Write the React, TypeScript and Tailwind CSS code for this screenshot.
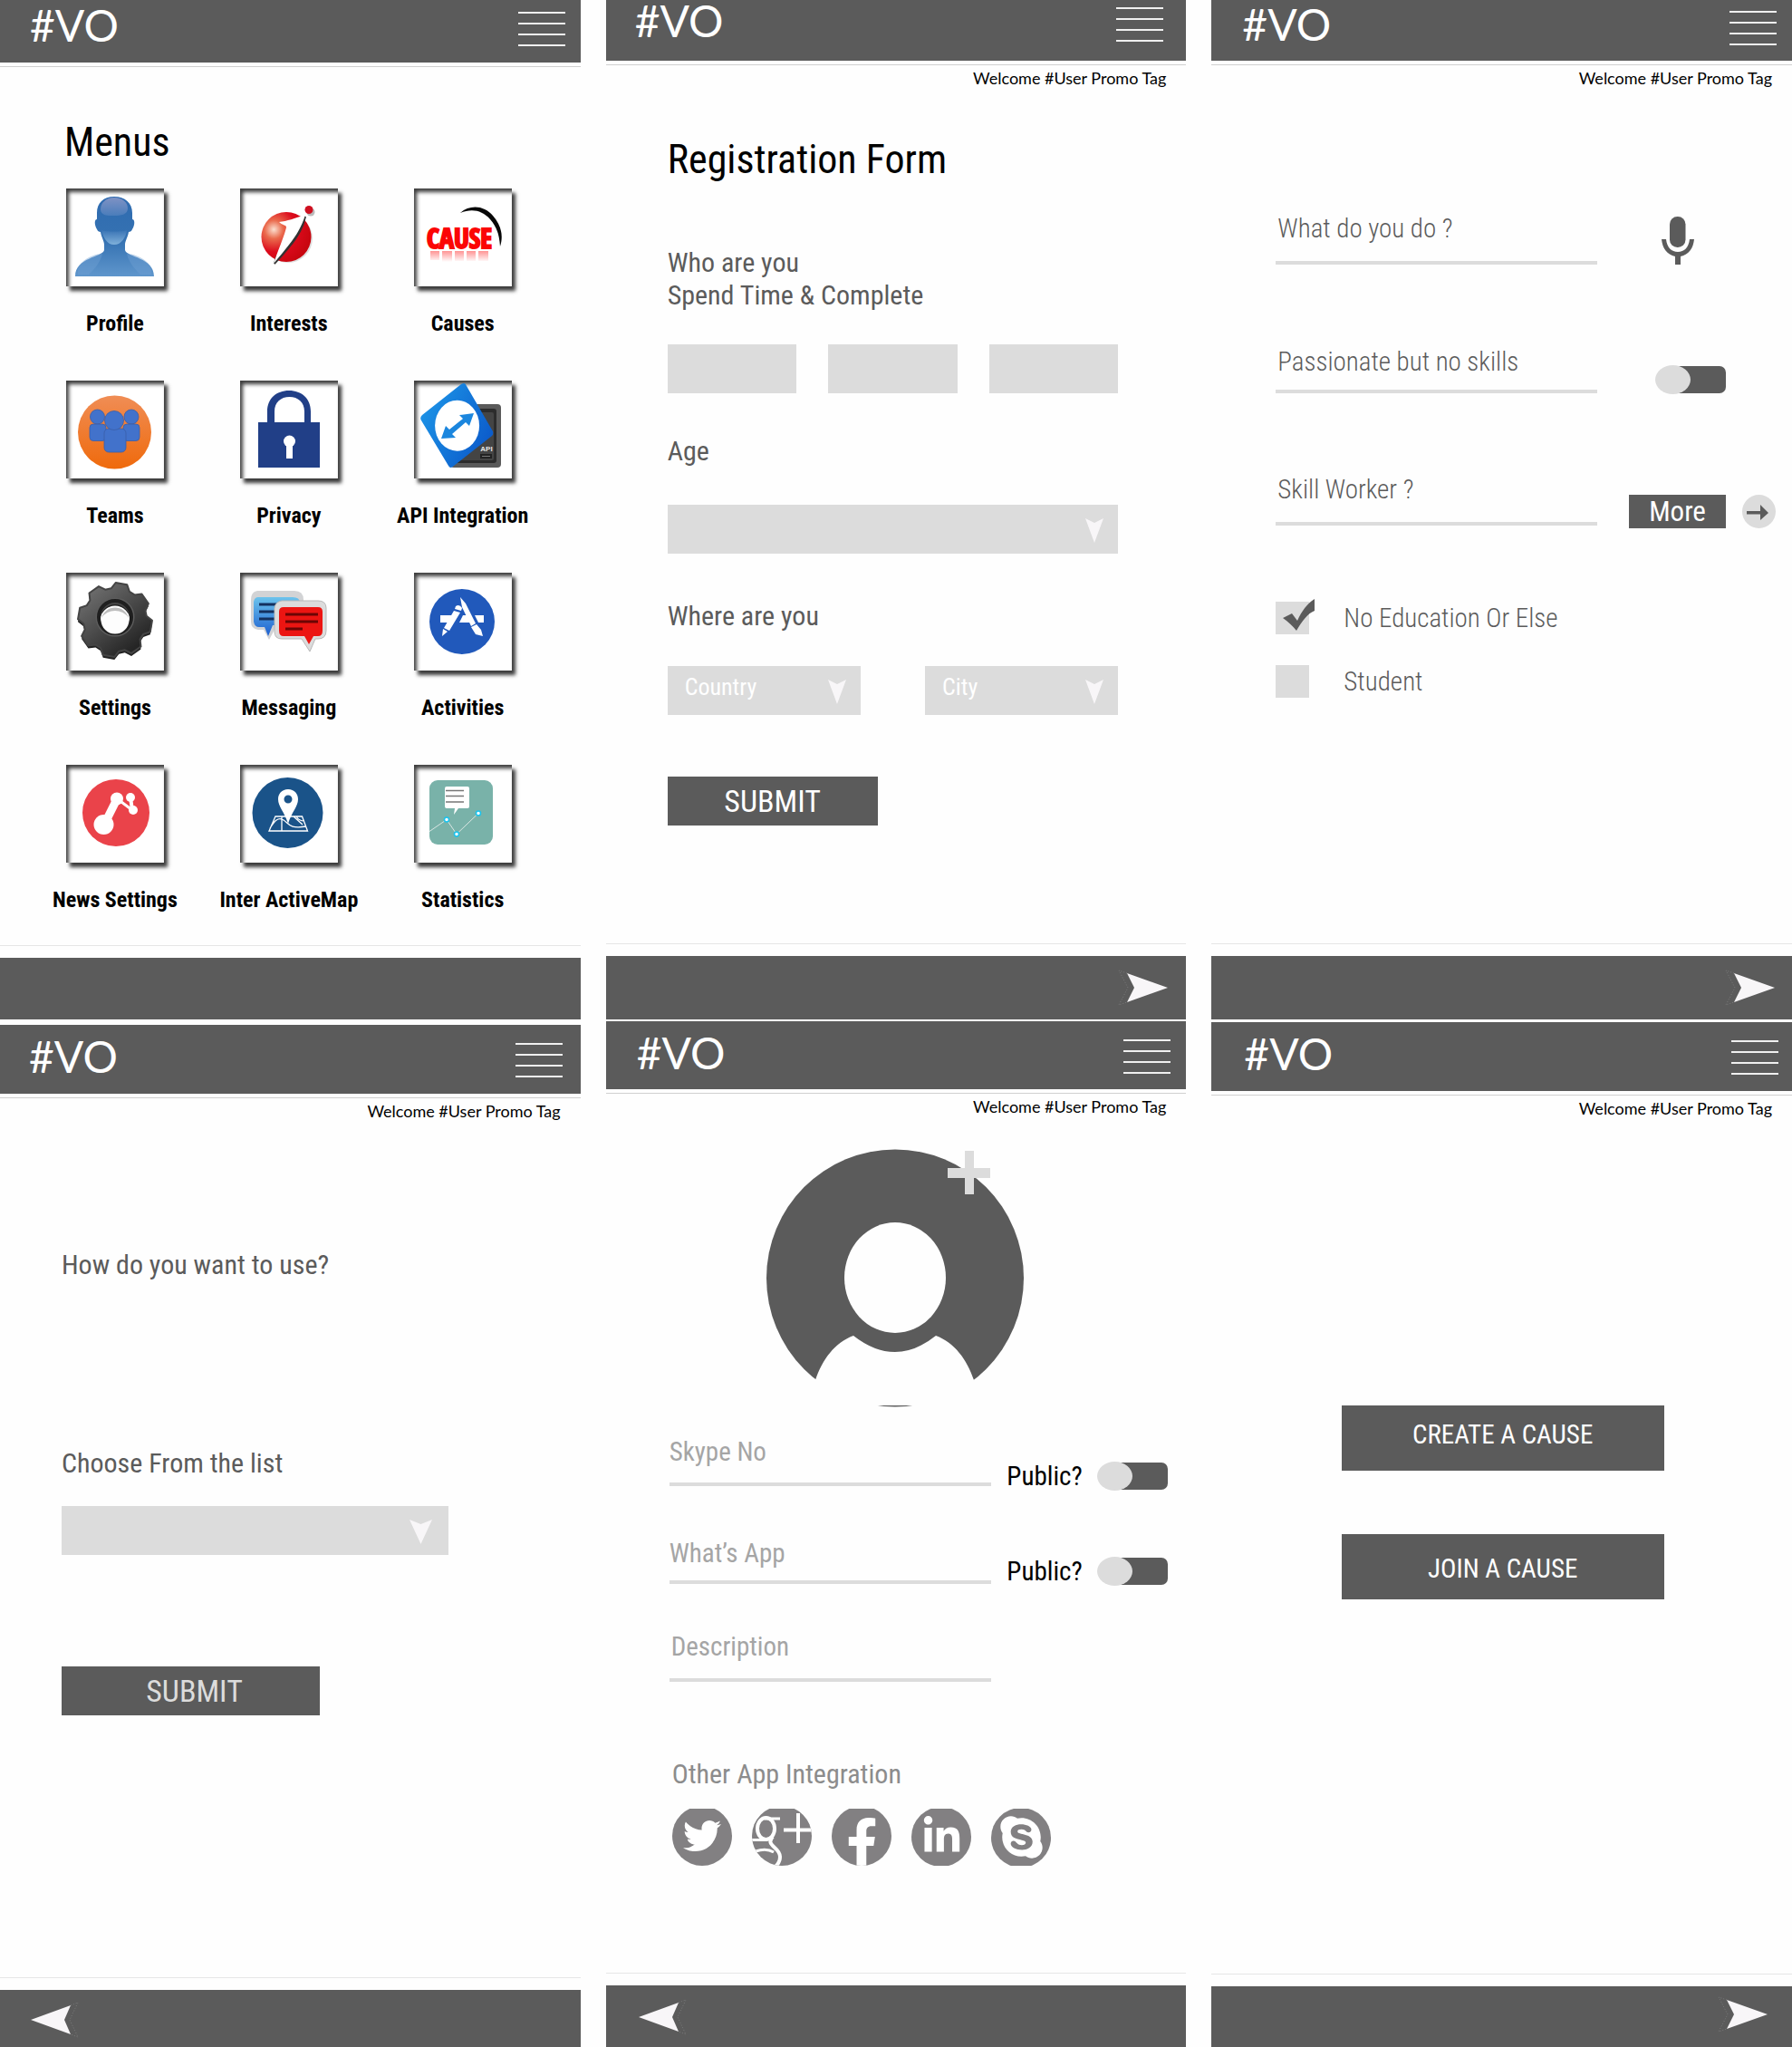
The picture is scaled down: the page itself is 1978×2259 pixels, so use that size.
import React from "react";
import {
  FaFacebookF,
  FaLinkedinIn,
  FaSkype,
  FaTwitter,
} from "react-icons/fa";

/* ---------- shared pieces ---------- */

function Burger() {
  return (
    <button type="button" aria-label="Open menu" className="mt-[5px] flex w-[52px] flex-col gap-[10px]">
      <span className="h-[2px] w-full bg-[#f0f0f0]" />
      <span className="h-[2px] w-full bg-[#f0f0f0]" />
      <span className="h-[2px] w-full bg-[#f0f0f0]" />
      <span className="h-[2px] w-full bg-[#f0f0f0]" />
    </button>
  );
}

function NavArrow({ back = false }: { back?: boolean }) {
  return (
    <button type="button" aria-label={back ? "Back" : "Next"} className="h-8 w-[54px]">
      <svg viewBox="0 0 54 32" className="h-8 w-[54px] overflow-visible">
        {back ? (
          <>
            <path d="M0 16 44 0 37 16 44 32Z" fill="#f8f6f8" />
            <path d="M44 0 52 -3 43 16 52 35 44 32" fill="none" stroke="#7c7c7c" strokeDasharray="1 2" />
          </>
        ) : (
          <>
            <path d="M54 16 9 0 17 16 9 32Z" fill="#f8f6f8" />
            <path d="M9 0 0 -3 10 16 0 35 9 32" fill="none" stroke="#7c7c7c" strokeDasharray="1 2" />
          </>
        )}
      </svg>
    </button>
  );
}

type ScreenProps = {
  headerClass: string;
  footerClass: string;
  className?: string;
  welcome?: boolean;
  nav?: "back" | "next";
  children: React.ReactNode;
};

function Screen({ headerClass, footerClass, className = "", welcome = true, nav, children }: ScreenProps) {
  return (
    <section className={"flex flex-col " + className}>
      <header className={"flex items-start justify-between bg-[#5b5b5b] " + headerClass}>
        <a href="#home" className="font-['Lato','Open_Sans',sans-serif] text-[48px] leading-10 text-white">
          #VO
        </a>
        <Burger />
      </header>
      <div className="mt-1 h-px bg-[#d0d0d0]" />
      {welcome && (
        <p className="px-[22px] text-right font-['Lato',sans-serif] text-[18px] leading-7 text-black">
          Welcome #User Promo Tag
        </p>
      )}
      <main className="flex-1">{children}</main>
      <div className="mb-[13px] h-px bg-[#e6e6e6]" />
      <footer className={"flex items-start bg-[#5b5b5b] " + footerClass}>{nav && <NavArrow back={nav === "back"} />}</footer>
    </section>
  );
}

type DropDownProps = { label?: string; id: string; text?: string; className?: string; arrowClass?: string };

function DropDown({ label, id, text = "", className = "", arrowClass = "right-4 w-5" }: DropDownProps) {
  return (
    <div className={"relative " + className}>
      <select
        id={id}
        aria-label={label}
        className="h-[54px] w-full appearance-none bg-[#dcdcdc] pr-12 pb-2 pl-[19px] text-[26px] text-white"
      >
        <option>{text}</option>
      </select>
      <svg
        viewBox="0 0 20 27"
        preserveAspectRatio="none"
        className={"pointer-events-none absolute top-[15px] h-[27px] " + arrowClass}
        aria-hidden="true"
      >
        <path d="M0 0 10 5 20 0 10 27Z" fill="#f8f6f8" />
      </svg>
    </div>
  );
}

function Toggle({ label, text }: { label?: string; text?: string }) {
  return (
    <label className="flex items-center justify-between">
      {text && <span className="text-[29px] leading-8 text-black">{text}</span>}
      <input type="checkbox" role="switch" aria-label={label} className="sr-only" />
      <span className="flex w-[78px] items-center">
        <span className="z-10 h-8 w-[39px] shrink-0 rounded-[50%] bg-[#dcdcdc]" />
        <span className="-ml-5 h-[30px] flex-1 rounded-[7px] bg-[#5b5b5b]" />
      </span>
    </label>
  );
}

function LineField({ label, className = "" }: { label: string; className?: string }) {
  return (
    <input
      type="text"
      aria-label={label}
      placeholder={label}
      className={"min-w-0 flex-1 border-b-4 border-[#dcdcdc] bg-transparent pt-0 leading-9 outline-none " + className}
    />
  );
}

/* ---------- menu icons ---------- */

function ProfileIcon() {
  return (
    <>
      <defs>
        <linearGradient id="pf" x1="0" y1="0" x2="0" y2="1">
          <stop offset="0" stopColor="#2f6bb0" />
          <stop offset="0.55" stopColor="#3572b2" />
          <stop offset="1" stopColor="#5f96cc" />
        </linearGradient>
        <linearGradient id="pfh" x1="0" y1="0" x2="0" y2="1">
          <stop offset="0" stopColor="#7f92c4" />
          <stop offset="1" stopColor="#4a7dbb" />
        </linearGradient>
        <linearGradient id="pfc" x1="0" y1="0" x2="0" y2="1">
          <stop offset="0" stopColor="#3a74b5" />
          <stop offset="1" stopColor="#7fb0da" />
        </linearGradient>
      </defs>
      <path
        d="M53 9C41 9 34 16 34 27V34C31 34 31 40 34 45Q35 48 38 48C39 54 42 58 42 62V68C40 76 10 76 10 97H97C97 76 67 76 65 68V62C65 58 68 54 69 48Q72 48 73 45C76 40 76 34 73 34V27C73 16 65 9 53 9Z"
        fill="url(#pf)"
      />
      <path d="M53 10C44 10 38 16 38 23S46 30 53 30 68 29 68 22 62 10 53 10Z" fill="url(#pfh)" />
      <path d="M39 46C44 48 62 48 67 46 66 54 61 62 53 62S41 54 39 46Z" fill="url(#pfc)" />
      <path d="M17 82C24 75 34 72 40 72 38 82 30 90 25 95H13C12 90 14 85 17 82ZM90 82C83 75 73 72 67 72 69 82 77 90 82 95H94C95 90 93 85 90 82Z" fill="#6f9fd2" opacity="0.45" />
    </>
  );
}

function InterestsIcon() {
  return (
    <>
      <defs>
        <radialGradient id="ball" cx="0.25" cy="0.35" r="0.75">
          <stop offset="0" stopColor="#fbe0d0" />
          <stop offset="0.25" stopColor="#ea6a4c" />
          <stop offset="0.6" stopColor="#dc0a1c" />
          <stop offset="1" stopColor="#c8060f" />
        </radialGradient>
      </defs>
      <circle cx="53" cy="55" r="27" fill="#dedede" />
      <circle cx="51" cy="53.5" r="27.5" fill="url(#ball)" />
      <path d="M72 31C68 50 56 63 38 83L40 76C54 62 64 50 72 31Z" fill="#333" stroke="#333" strokeWidth="2" />
      <path d="M43 37C52 36 60 33 72 29 66 49 56 60 37 83 42 68 49 52 51 43 51 40 47 41 43 37Z" fill="#fff" />
      <circle cx="78" cy="26" r="4.5" fill="#bbb" />
      <circle cx="76" cy="23.5" r="4.5" fill="#cf1020" />
    </>
  );
}

function CausesIcon() {
  return (
    <>
      <defs>
        <linearGradient id="refl" x1="0" y1="0" x2="0" y2="1">
          <stop offset="0" stopColor="#f66" stopOpacity="0.7" />
          <stop offset="1" stopColor="#f66" stopOpacity="0" />
        </linearGradient>
      </defs>
      <text
        x="50"
        y="66"
        textAnchor="middle"
        className="font-['Open_Sans_Condensed','Roboto_Condensed',sans-serif] text-[30px] font-bold"
        fill="#fb0505"
        stroke="#fb0505"
        strokeWidth="2"
      >
        CAUSE
      </text>
      <path d="M18 69H28V79H18ZM31 69H42V81H31ZM45 69H55V80H45ZM58 69H68V80H58ZM71 69H82V80H71Z" fill="url(#refl)" />
      <path d="M51 27C62 17 78 19 87 30 96 40 99 52 95 64 94 50 91 42 84 34 75 24 64 22 51 27Z" fill="#080808" />
    </>
  );
}

function TeamsIcon() {
  return (
    <>
      <defs>
        <linearGradient id="tm" x1="0" y1="0" x2="0" y2="1">
          <stop offset="0" stopColor="#f08d55" />
          <stop offset="1" stopColor="#ef6a0c" />
        </linearGradient>
      </defs>
      <circle cx="53.5" cy="57" r="40.5" fill="url(#tm)" />
      <g fill="#4272cb" stroke="#3a5ea8" strokeWidth="0.8">
        <circle cx="34.5" cy="40" r="8" />
        <rect x="26" y="48" width="18" height="18.5" rx="4" />
        <circle cx="72" cy="40" r="8" />
        <rect x="63" y="48" width="18" height="18.5" rx="4" />
        <rect x="42" y="53" width="24" height="26" rx="5" />
        <circle cx="53" cy="44" r="10.5" />
      </g>
    </>
  );
}

function PrivacyIcon() {
  return (
    <>
      <path d="M20 46H30V34C30 20 40 11 54 11S78 20 78 34V46H88V96H20ZM38 46H71V34C71 24 64 18 54.5 18S38 24 38 34Z" fill="#213f87" fillRule="evenodd" />
      <circle cx="54.5" cy="67" r="6.5" fill="#fff" />
      <rect x="51" y="70" width="7" height="16" fill="#fff" />
    </>
  );
}

function ApiIcon() {
  return (
    <>
      <defs>
        <linearGradient id="api" x1="0" y1="0.2" x2="1" y2="0.8">
          <stop offset="0" stopColor="#1d96e8" />
          <stop offset="1" stopColor="#0a56c8" />
        </linearGradient>
      </defs>
      <rect x="40" y="26" width="56" height="70" rx="4" fill="#5a5a5a" />
      <rect x="45" y="31" width="46" height="60" rx="3" fill="#2c2c2c" />
      <rect x="48" y="35" width="40" height="53" rx="2" fill="#444" />
      <text x="80" y="78" textAnchor="middle" className="font-['Liberation_Sans',sans-serif] text-[8px] font-bold" fill="#e6e6e6">
        API
      </text>
      <rect x="73" y="81" width="13" height="5" fill="#222" />
      <path d="M75 83.5H84" stroke="#777" />
      <path d="M55 3Q57 3 58 6L87 56Q88 59 86 61L44 94Q40 98 38 94L8 44Q6 41 9 38L52 4Q54 3 55 3Z" fill="url(#api)" />
      <ellipse cx="47.6" cy="49.7" rx="24.5" ry="28" fill="#fff" />
      <path d="M66 36 61 50 57 46 42 59 46 63 30 64 35 50 39 54 54 42 50 38Z" fill="#1b86de" />
    </>
  );
}

const gearPath = (() => {
  const pts: string[] = [];
  for (let i = 0; i < 8; i++) {
    const mid = 10 + i * 45;
    const steps: [number, number][] = [
      [mid - 17, 35],
      [mid - 9, 41],
      [mid + 9, 41],
      [mid + 17, 35],
    ];
    for (const [deg, r] of steps) {
      const a = (deg * Math.PI) / 180;
      pts.push((54 + r * Math.sin(a)).toFixed(1) + " " + (52 - r * Math.cos(a)).toFixed(1));
    }
  }
  return "M" + pts.join("L") + "Z";
})();

const gearHole = "M54 34A17 17 0 1 0 54 68A17 17 0 1 0 54 34Z";

function SettingsIcon() {
  return (
    <>
      <defs>
        <linearGradient id="gear" x1="0" y1="0" x2="0.8" y2="1">
          <stop offset="0" stopColor="#7a7a7a" />
          <stop offset="0.5" stopColor="#4c4c4c" />
          <stop offset="1" stopColor="#1c1c1c" />
        </linearGradient>
      </defs>
      <path d={gearPath + gearHole} fill="#222" fillRule="evenodd" transform="translate(0 3)" />
      <path d={gearPath + gearHole} fill="url(#gear)" fillRule="evenodd" strokeLinejoin="round" stroke="#444" strokeWidth="2" />
      <circle cx="54" cy="49" r="20.5" fill="none" stroke="#5c5c5c" strokeWidth="2" />
      <circle cx="54" cy="49" r="18" fill="none" stroke="#1f1f1f" strokeWidth="4" />
      <circle cx="54" cy="52" r="15.5" fill="#fdfdfd" />
      <path d="M39 50A15.5 15.5 0 0 1 69 50 18 18 0 0 0 39 50Z" fill="#bdbdbd" />
    </>
  );
}

function MessagingIcon() {
  return (
    <>
      <defs>
        <linearGradient id="blu" x1="0" y1="0" x2="0" y2="1">
          <stop offset="0" stopColor="#6cc3ec" />
          <stop offset="1" stopColor="#1d5fd0" />
        </linearGradient>
      </defs>
      <path d="M19 20H60Q70 20 70 30V50Q70 62 60 63H38L32 74 26 63H20Q12 62 12 54V30Q12 21 19 20Z" fill="#d2d3d5" />
      <path d="M20 27H58Q66 27 66 33V58H36L31 70 27 60H21Q16 60 15 54V32Q16 27 20 27Z" fill="url(#blu)" />
      <path d="M21 35H46M21 43H46M21 51H46" stroke="#14305e" strokeWidth="3" />
      <path d="M46 31H86Q95 31 95 39V64Q95 73 86 73H83L77 87 68 73H46Q38 73 38 65V39Q39 32 46 31Z" fill="#dcdcdc" stroke="#b9b9b9" />
      <path d="M48 38H86Q91 38 91 43V64Q91 70 86 70H81L76 79 71 70H48Q43 70 43 64V43Q43 38 48 38Z" fill="#ec1512" />
      <path d="M50 46H86M50 54H86M50 62H69" stroke="#6d0504" strokeWidth="3" />
    </>
  );
}

function ActivitiesIcon() {
  return (
    <>
      <circle cx="53" cy="54" r="36" fill="#2159bb" />
      <path d="M29 47H44L39 55H29ZM54 47H59L63 55H50ZM67 47H77V55H71Z" fill="#fff" />
      <path d="M46 37Q50 34 53 39L52 42 45 40ZM44 42 51 44 39 64 33 61ZM32 62 37 65 31 70Z" fill="#fff" />
      <path d="M51 27 57 34 68 56 63 59 53 38ZM63 60 69 57 74 63 76 70 68 68Z" fill="#fff" />
    </>
  );
}

function NewsIcon() {
  return (
    <>
      <circle cx="55" cy="53" r="37" fill="#ea434a" />
      <g fill="#fff" stroke="#fff" strokeLinecap="round">
        <circle cx="41.5" cy="66" r="11" stroke="none" />
        <circle cx="56" cy="37.5" r="7" stroke="none" />
        <circle cx="71" cy="36" r="5" stroke="none" />
        <circle cx="74" cy="50" r="5" stroke="none" />
        <path d="M44 62 55 40" strokeWidth="9" />
        <path d="M57 38 73 50" strokeWidth="3" />
        <path d="M71 36 73 50" strokeWidth="4" />
      </g>
    </>
  );
}

function MapIcon() {
  return (
    <>
      <circle cx="52.5" cy="53" r="39" fill="#1a5389" />
      <g fill="none" stroke="#fff" strokeWidth="1.3">
        <path d="M39 57H68.5L74.5 73H32ZM46 57V73M33 70C38 62 42 57 48 61S54 71 73 68M59 57 69 66M62 57Q65 62 71 62" />
      </g>
      <path d="M53 27C46 27 42 32 42 38 42 46 49 52 53 65 57 52 64 46 64 38 64 32 60 27 53 27ZM53 33.5A4.5 4.5 0 1 1 53 42.5 4.5 4.5 0 1 1 53 33.5Z" fill="#fff" fillRule="evenodd" />
    </>
  );
}

function StatisticsIcon() {
  return (
    <>
      <rect x="17" y="17" width="70" height="71" rx="9" fill="#79b2a9" />
      <path d="M36 24H59Q61 24 61 26V46Q61 48 59 48H49L44 55 45 48H36Q34 48 34 46V26Q34 24 36 24Z" fill="#fff" />
      <path d="M35 28.5H55M35 34.5H55M35 41H55" stroke="#777" strokeWidth="1.5" />
      <path d="M17 73.5 36 60.5 47 76.5 71 53.5" fill="none" stroke="#d9e6e3" />
      <g fill="#fff" stroke="#19c3ee" strokeWidth="1.5">
        <circle cx="36" cy="60.5" r="2.5" />
        <circle cx="47" cy="76.5" r="2.5" />
        <circle cx="71" cy="53.5" r="2.5" />
      </g>
    </>
  );
}

const menuItems = [
  { label: "Profile", Icon: ProfileIcon },
  { label: "Interests", Icon: InterestsIcon },
  { label: "Causes", Icon: CausesIcon },
  { label: "Teams", Icon: TeamsIcon },
  { label: "Privacy", Icon: PrivacyIcon },
  { label: "API Integration", Icon: ApiIcon },
  { label: "Settings", Icon: SettingsIcon },
  { label: "Messaging", Icon: MessagingIcon },
  { label: "Activities", Icon: ActivitiesIcon },
  { label: "News Settings", Icon: NewsIcon },
  { label: "Inter ActiveMap", Icon: MapIcon },
  { label: "Statistics", Icon: StatisticsIcon },
];

/* ---------- screens ---------- */

function MenuScreen() {
  return (
    <Screen headerClass="h-[69px] pt-2 pr-[17px] pl-[33px]" footerClass="h-[68px]" welcome={false}>
      <h1 className="mt-[58px] pl-[71px] text-[44px] leading-[50px] text-black">Menus</h1>
      <nav className="mt-[26px] grid grid-cols-3 gap-y-[46px] pr-[34px] pb-[33px] pl-[31px]">
        {menuItems.map(({ label, Icon }) => (
          <a key={label} href="#menu" className="flex flex-col items-center">
            <span className="h-[108px] w-[108px] bg-white shadow-[4px_5px_4px_#3c3c3c,inset_3px_4px_4px_#3c3c3c]">
              <svg viewBox="0 0 108 108" className="h-[108px] w-[108px]" aria-hidden="true">
                <Icon />
              </svg>
            </span>
            <span className="mt-[25px] mb-px text-[24px] leading-8 font-bold whitespace-nowrap text-black">{label}</span>
          </a>
        ))}
      </nav>
    </Screen>
  );
}

function RegistrationScreen() {
  return (
    <Screen headerClass="h-[67px] pt-[3px] pr-[25px] pl-8" footerClass="h-[70px] justify-end pt-[19px] pr-5" nav="next">
      <form className="pt-[51px] pr-[75px] pb-[130px] pl-[68px]" onSubmit={(e) => e.preventDefault()}>
        <h1 className="text-[44px] leading-[50px] whitespace-nowrap text-black">Registration Form</h1>
        <p className="mt-[71px] text-[30px] leading-9 whitespace-nowrap">
          Who are you
          <br />
          Spend Time &amp; Complete
        </p>
        <div className="mt-9 grid grid-cols-3 gap-[35px]">
          <input type="text" aria-label="First name" className="h-[54px] w-full bg-[#dcdcdc] px-3 text-[26px]" />
          <input type="text" aria-label="Middle name" className="h-[54px] w-full bg-[#dcdcdc] px-3 text-[26px]" />
          <input type="text" aria-label="Last name" className="h-[54px] w-full bg-[#dcdcdc] px-3 text-[26px]" />
        </div>
        <label htmlFor="age" className="mt-[46px] block text-[30px] leading-9">
          Age
        </label>
        <DropDown id="age" className="mt-[41px]" />
        <p className="mt-[51px] text-[30px] leading-9">Where are you</p>
        <div className="mt-[37px] grid grid-cols-2 gap-[71px]">
          <DropDown id="country" label="Country" text="Country" />
          <DropDown id="city" label="City" text="City" />
        </div>
        <button type="submit" className="mt-[68px] h-[54px] w-[232px] bg-[#5b5b5b] text-[34px] leading-none text-white">
          SUBMIT
        </button>
      </form>
    </Screen>
  );
}

function CheckRow({ label, checked = false }: { label: string; checked?: boolean }) {
  return (
    <label className="flex items-center">
      <span className="relative h-9 w-[37px]">
        <input type="checkbox" defaultChecked={checked} className="peer h-9 w-[37px] appearance-none bg-[#dcdcdc]" />
        <svg
          viewBox="0 0 36 36"
          className="pointer-events-none absolute -top-[3px] left-2 hidden h-9 w-9 peer-checked:block"
          aria-hidden="true"
        >
          <path d="M0 21 10 16 16 24C21 13 27 5 35 0V13C27 16 21 25 15 35 11 30 6 25 0 21Z" fill="#5b5b5b" />
        </svg>
      </span>
      <span className="ml-[38px] text-[29px] leading-9 font-light">{label}</span>
    </label>
  );
}

function SkillsScreen() {
  const field = "placeholder:text-[#5b5b5b] text-[#5b5b5b] pl-[2px] text-[29px] font-light";
  return (
    <Screen headerClass="h-[67px] pt-[7px] pr-[17px] pl-[34px]" footerClass="h-[70px] justify-end pt-[19px] pr-[19px]" nav="next">
      <form className="pt-[134px] pb-[271px] pl-[71px]" onSubmit={(e) => e.preventDefault()}>
        <div className="flex items-end">
          <LineField label="What do you do ?" className={field + " pb-[18px]"} />
          <div className="w-[215px] pl-[71px]">
            <button type="button" aria-label="Speak" className="block">
              <svg viewBox="0 0 36 53" className="h-[53px] w-9" fill="#5b5b5b">
                <rect x="9" y="0" width="17.5" height="34" rx="8.5" />
                <path d="M0 25H5C6 34 11 39 18 39S30 34 31 25H36C35 35 30 42 21 44V53H15V44C6 42 1 35 0 25Z" />
              </svg>
            </button>
          </div>
        </div>
        <div className="mt-[89px] flex items-end">
          <LineField label="Passionate but no skills" className={field + " pb-[13px]"} />
          <div className="-mb-px w-[215px] pr-[73px] pl-16">
            <Toggle label="Passionate but no skills" />
          </div>
        </div>
        <div className="mt-[88px] flex items-end">
          <LineField label="Skill Worker ?" className={field + " pb-[18px]"} />
          <div className="-mb-[3px] flex w-[215px] items-center gap-[18px] pl-[35px]">
            <button type="button" className="h-[37px] w-[107px] bg-[#5b5b5b] text-[31px] leading-none text-white">
              More
            </button>
            <button type="button" aria-label="Continue" className="h-[37px] w-[37px] rounded-full bg-[#dcdcdc]">
              <svg viewBox="0 0 37 37" className="h-[37px] w-[37px]" aria-hidden="true">
                <path d="M5 18H20V11L29 20 20 28V21.5H5Z" fill="#5b5b5b" />
              </svg>
            </button>
          </div>
        </div>
        <div className="mt-[84px] flex flex-col gap-[34px]">
          <CheckRow label="No Education Or Else" checked />
          <CheckRow label="Student" />
        </div>
      </form>
    </Screen>
  );
}

function UsageScreen() {
  return (
    <Screen
      className="flex-1"
      headerClass="h-[76px] pt-[15px] pr-5 pl-8"
      footerClass="h-[63px] pt-[17px] pl-[34px]"
      nav="back"
    >
      <form className="pt-[138px] pl-[68px]" onSubmit={(e) => e.preventDefault()}>
        <p className="text-[30px] leading-9">How do you want to use?</p>
        <label htmlFor="use" className="mt-[183px] block text-[30px] leading-9">
          Choose From the list
        </label>
        <DropDown id="use" className="mt-[29px] mr-[146px]" arrowClass="right-[18px] w-[25px]" />
        <button type="submit" className="mt-[123px] h-[54px] w-[285px] bg-[#5b5b5b] pl-2 text-[34px] leading-none text-[#dcdcdc]">
          SUBMIT
        </button>
      </form>
    </Screen>
  );
}

function SocialIcon({ label, cy = 30, children }: { label: string; cy?: number; children: React.ReactNode }) {
  return (
    <a href="#integration" aria-label={label} className="block h-16 w-[66px]">
      <svg viewBox="0 0 66 64" className="h-16 w-[66px]">
        <defs>
          <clipPath id={"disc-" + label}>
            <circle cx="33" cy={cy} r="33" />
          </clipPath>
        </defs>
        <g clipPath={"url(#disc-" + label + ")"}>
          <rect width="66" height="63" fill="#828082" />
          {children}
        </g>
      </svg>
    </a>
  );
}

function ContactScreen() {
  const field = "placeholder:text-[#a5a5a5] text-[#5b5b5b] text-[29px]";
  return (
    <Screen
      className="flex-1"
      headerClass="h-[75px] pt-[15px] pr-[17px] pl-[34px]"
      footerClass="h-[68px] pt-[19px] pl-9"
      nav="back"
    >
      <form className="pt-[33px] pr-[20px] pl-[70px]" onSubmit={(e) => e.preventDefault()}>
        <button type="button" aria-label="Add a photo" className="ml-[107px] block">
          <svg viewBox="0 0 284 285" className="h-[285px] w-[284px]">
            <circle cx="142" cy="142.5" r="142" fill="#5b5b5b" />
            <ellipse cx="142" cy="142" rx="56" ry="61" fill="#fefefe" />
            <path
              d="M96 206Q142 242 187 206C208 214 221 232 229 255L240 283H44L54 255C62 232 75 214 96 206Z"
              fill="#fefefe"
            />
            <path d="M219 2H229V21H247V32H229V50H219V32H200V21H219Z" fill="#dcdcdc" />
          </svg>
        </button>
        <div className="mt-[31px] flex items-end">
          <LineField label="Skype No" className={field + " pb-4"} />
          <div className="-mb-[5px] w-[195px] pl-[17px]">
            <Toggle text="Public?" />
          </div>
        </div>
        <div className="mt-[56px] flex items-end">
          <LineField label="What’s App" className={field + " pb-3"} />
          <div className="-mb-[2px] w-[195px] pl-[17px]">
            <Toggle text="Public?" />
          </div>
        </div>
        <div className="mt-[51px] mr-[195px] flex">
          <LineField label="Description" className={field + " pb-[17px] pl-[2px]"} />
        </div>
        <p className="mt-[84px] pl-[3px] text-[30px] leading-9 text-[#8c8c8c]">Other App Integration</p>
        <div className="mt-5 flex gap-[22px] pl-[3px]">
          <SocialIcon label="Twitter">
            <FaTwitter x={12} y={9} size={42} color="#fff" />
          </SocialIcon>
          <SocialIcon label="Google">
            <g fill="none" stroke="#fff" strokeWidth="4">
              <ellipse cx="15.5" cy="22" rx="9.5" ry="12" />
              <path d="M14 11H31" strokeWidth="3" />
              <path d="M23 31C14 41 31 42 31 53Q31 59 26 64" />
              <path d="M0 34.5H17M4 47Q16 43 24 48" strokeWidth="3" />
              <path d="M51 5V38M35 23.5H66" />
            </g>
          </SocialIcon>
          <SocialIcon label="Facebook">
            <FaFacebookF x={6} y={10} size={55} color="#fff" />
          </SocialIcon>
          <SocialIcon label="LinkedIn" cy={31}>
            <FaLinkedinIn x={11} y={8} size={45} color="#fff" />
          </SocialIcon>
          <SocialIcon label="Skype" cy={32}>
            <FaSkype x={7} y={5} size={53} color="#fff" />
          </SocialIcon>
        </div>
      </form>
    </Screen>
  );
}

function CauseScreen() {
  return (
    <Screen
      className="flex-1"
      headerClass="h-[76px] pt-[15px] pr-[15px] pl-[36px]"
      footerClass="h-[67px] justify-end pt-[15px] pr-[27px]"
      nav="next"
    >
      <div className="flex flex-col items-center gap-[70px] pt-[314px] pl-[2px]">
        <button type="button" className="h-[72px] w-[356px] bg-[#5b5b5b] pb-2 text-[29px] leading-none text-white">
          CREATE A CAUSE
        </button>
        <button type="button" className="h-[72px] w-[356px] bg-[#5b5b5b] pt-1 text-[29px] leading-none text-white">
          JOIN A CAUSE
        </button>
      </div>
    </Screen>
  );
}

export default function App() {
  return (
    <div className="grid min-h-screen grid-cols-3 gap-x-7 bg-[#fefefe] font-['Roboto_Condensed','Roboto',sans-serif] text-[#5b5b5b]">
      <div className="flex flex-col gap-[6px]">
        <MenuScreen />
        <UsageScreen />
      </div>
      <div className="flex flex-col gap-[2px]">
        <RegistrationScreen />
        <ContactScreen />
      </div>
      <div className="flex flex-col gap-[3px]">
        <SkillsScreen />
        <CauseScreen />
      </div>
    </div>
  );
}
